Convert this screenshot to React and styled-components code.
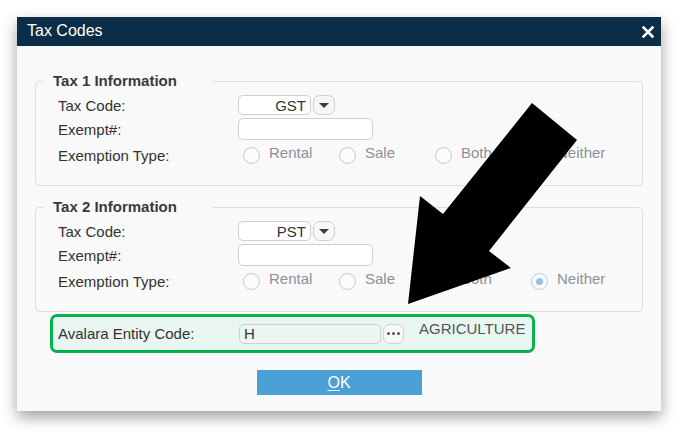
import React from "react"
import styled, { createGlobalStyle } from "styled-components"

const Global = createGlobalStyle`
    body {
        margin: 0;
        background: #ffffff;
        font-family: "Liberation Sans", Arial, sans-serif;
    }
`
const Page = styled.div`
    position: relative;
    width: 687px;
    height: 436px;
    padding: 17px 0 0 17px;
    box-sizing: border-box;
`
const Dialog = styled.div`
    display: flex;
    flex-direction: column;
    width: 644px;
    height: 394px;
    background: #f9f9f9;
    box-shadow: 0 6px 14px rgba(0, 0, 0, 0.38);
`
const TitleBar = styled.div`
    display: flex;
    align-items: center;
    justify-content: space-between;
    height: 27px;
    padding: 0 7px 2px 10px;
    background: #0b2d48;
    color: #ffffff;
    font-size: 16px;
`
const Close = styled.svg`
    width: 12px;
    height: 12px;
    margin-top: 2px;
`
const Body = styled.div`
    display: flex;
    flex-direction: column;
    padding: 26px 18px 0 18px;
`
const Group = styled.fieldset`
    margin: 0;
    margin-top: ${p => p.$gap || 0}px;
    padding: 3px 0 16px 7px;
    border: 1px solid #dedede;
    border-radius: 4px;
    min-width: 0;
`
const Legend = styled.legend`
    width: 150px;
    padding: 0 10px;
    font-size: 15px;
    line-height: 18px;
    font-weight: 700;
    color: #3a3a3a;
`
const Rows = styled.div`
    display: flex;
    flex-direction: column;
    padding-left: 15px;
`
const Row = styled.div`
    display: flex;
    align-items: center;
    height: ${p => p.$h || 24}px;
`
const Label = styled.div`
    width: ${p => p.$w || 180}px;
    font-size: 15px;
    color: #333333;
    flex-shrink: 0;
`
const Input = styled.div`
    box-sizing: border-box;
    width: ${p => p.$w}px;
    height: ${p => p.$h || 20}px;
    padding: 0 4px;
    display: flex;
    align-items: center;
    justify-content: ${p => (p.$right ? "flex-end" : "flex-start")};
    background: ${p => p.$bg || "#ffffff"};
    border: 1px solid #cfcfcf;
    border-radius: 5px;
    font-size: 15px;
    color: #333333;
`
const SmallBtn = styled.div`
    box-sizing: border-box;
    width: ${p => p.$w || 20}px;
    height: 20px;
    margin-left: 2px;
    display: flex;
    align-items: center;
    justify-content: center;
    background: #f7f7f7;
    border: 1px solid #cfcfcf;
    border-radius: 7px;
`
const Caret = styled.span`
    width: 0;
    height: 0;
    border-left: 5px solid transparent;
    border-right: 5px solid transparent;
    border-top: 5px solid #3c3c3c;
    margin-top: 1px;
`
const Dots = styled.span`
    display: flex;
    gap: 2px;
    & i {
        width: 3px;
        height: 3px;
        border-radius: 50%;
        background: #555555;
    }
`
const Radios = styled.div`
    display: flex;
`
const Option = styled.div`
    display: flex;
    align-items: center;
    width: 96px;
`
const Circle = styled.span`
    box-sizing: border-box;
    width: 17px;
    height: 17px;
    margin-left: 5px;
    border-radius: 50%;
    border: 1px solid ${p => (p.$on ? "#a9d0ea" : "#c6c6c6")};
    background: #fbfbfb;
    display: flex;
    align-items: center;
    justify-content: center;
    &::after {
        content: "";
        display: ${p => (p.$on ? "block" : "none")};
        width: 7px;
        height: 7px;
        border-radius: 50%;
        background: #8fc3e6;
    }
`
const OptText = styled.span`
    margin-left: 9px;
    margin-bottom: 5px;
    font-size: 15px;
    color: #8c919b;
`
const EntityRow = styled.div`
    display: flex;
    align-items: center;
    width: 485px;
    height: 39px;
    box-sizing: border-box;
    margin: 2px 0 0 15px;
    padding: 0 0 0 5px;
    border: 3px solid #06b14e;
    border-radius: 7px;
    background: #e8f5f1;
`
const Note = styled.span`
    margin: 0 0 10px 15px;
    font-size: 15px;
    color: #555555;
`
const Footer = styled.div`
    display: flex;
    justify-content: center;
    margin-top: 17px;
`
const OkButton = styled.button`
    width: 165px;
    height: 25px;
    border: none;
    background: #4a9fd4;
    color: #ffffff;
    font-family: "Liberation Sans", Arial, sans-serif;
    font-size: 16px;
    & u {
        text-underline-offset: 2px;
    }
`
const Arrow = styled.svg`
    position: absolute;
    left: 0;
    top: 0;
    width: 687px;
    height: 436px;
    pointer-events: none;
`

const options = ["Rental", "Sale", "Both", "Neither"]

const TaxGroup = ({ title, code, selected, gap }) => (
    <Group $gap={gap}>
        <Legend>{title}</Legend>
        <Rows>
            <Row>
                <Label>Tax Code:</Label>
                <Input $w={73} $right>{code}</Input>
                <SmallBtn $w={22}><Caret /></SmallBtn>
            </Row>
            <Row>
                <Label>Exempt#:</Label>
                <Input $w={135} $h={22} />
            </Row>
            <Row $h={28}>
                <Label>Exemption Type:</Label>
                <Radios>
                    {options.map(o => (
                        <Option key={o}>
                            <Circle $on={o === selected} />
                            <OptText>{o}</OptText>
                        </Option>
                    ))}
                </Radios>
            </Row>
        </Rows>
    </Group>
)

const App = () => (
    <Page>
        <Global />
        <Dialog>
            <TitleBar>
                Tax Codes
                <Close viewBox="0 0 12 12">
                    <path d="M1.5 1.5 L10.5 10.5 M10.5 1.5 L1.5 10.5" stroke="#ffffff" strokeWidth="2.6" strokeLinecap="square" />
                </Close>
            </TitleBar>
            <Body>
                <TaxGroup title="Tax 1 Information" code="GST" />
                <TaxGroup title="Tax 2 Information" code="PST" selected="Neither" gap={12} />
                <EntityRow>
                    <Label $w={181}>Avalara Entity Code:</Label>
                    <Input $w={142} $bg="#eaf6f2">H</Input>
                    <SmallBtn $w={21}><Dots><i /><i /><i /></Dots></SmallBtn>
                    <Note>AGRICULTURE</Note>
                </EntityRow>
                <Footer>
                    <OkButton><u>O</u>K</OkButton>
                </Footer>
            </Body>
        </Dialog>
        <Arrow viewBox="0 0 687 436">
            <polygon points="532,103 577,140 489,251 511,268 408,304 420,196 443,214" fill="#000000" />
        </Arrow>
    </Page>
)

export default App
